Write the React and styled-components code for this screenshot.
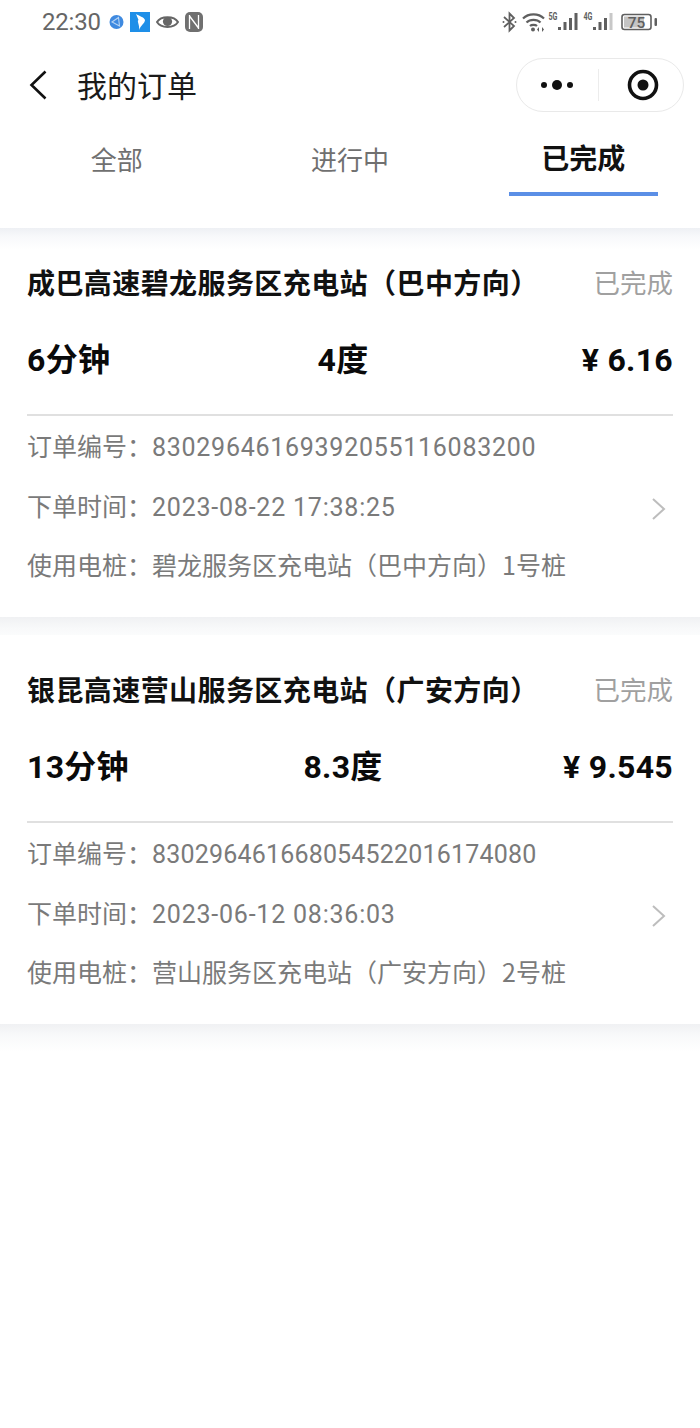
import React from "react";
import styled, { createGlobalStyle } from "styled-components";

const Global = createGlobalStyle`
  html, body { margin: 0; padding: 0; background: #fff; }
  body { font-family: Roboto, "Noto Sans CJK SC", sans-serif; }
  * { box-sizing: border-box; }
`;

const Page = styled.div`
  width: 700px;
  height: 1428px;
  background: #fff;
  overflow: hidden;
`;

const StatusBar = styled.div`
  height: 42px;
  padding: 1px 43px 0 42px;
  display: flex;
  align-items: center;
  color: #666;
`;

const Time = styled.span`
  font-family: Roboto, sans-serif;
  font-size: 24px;
  width: 67px;
  letter-spacing: -0.2px;
`;

const LeftIcons = styled.div`
  display: flex;
  align-items: center;
  gap: 6px;
`;

const RightIcons = styled.div`
  display: flex;
  align-items: center;
`;

const RightIcon = styled.svg`
  margin-left: ${(p) => p.$gap || 0}px;
`;

const Spacer = styled.div`
  flex: 1;
`;

const Nav = styled.div`
  height: 86px;
  padding: 0 16px 0 29px;
  display: flex;
  align-items: center;
`;

const Title = styled.h1`
  margin: 0 0 0 30px;
  padding-bottom: 3px;
  font-family: "Noto Sans CJK SC", sans-serif;
  font-size: 30px;
  font-weight: 400;
  color: #1a1a1a;
  flex: 1;
`;

const Capsule = styled.div`
  width: 168px;
  height: 54px;
  border: 1px solid #e9e9e9;
  border-radius: 27px;
  display: flex;
  align-items: center;
  background: #fff;
`;

const CapsuleCell = styled.div`
  flex: 1;
  display: flex;
  align-items: center;
  justify-content: center;
  padding-left: ${(p) => p.$shift || 0}px;
`;

const CapsuleDivider = styled.div`
  width: 1px;
  height: 32px;
  background: #ececec;
`;

const Tabs = styled.div`
  position: relative;
  z-index: 1;
  height: 100px;
  display: flex;
  background: #fff;

  &::after {
    content: "";
    position: absolute;
    top: 100%;
    left: 0;
    right: 0;
    height: 22px;
    background: linear-gradient(#eef0f4, #f8f9fb 40%, rgba(255, 255, 255, 0));
  }
`;

const Tab = styled.div`
  position: relative;
  flex: 1;
  height: 64px;
  padding-top: ${(p) => (p.$active ? 9 : 11)}px;
  text-align: center;
  font-family: "Noto Sans CJK SC", sans-serif;
  font-size: ${(p) => (p.$active ? 28 : 26)}px;
  line-height: 40px;
  font-weight: ${(p) => (p.$active ? 700 : 400)};
  color: ${(p) => (p.$active ? "#111" : "#707070")};
`;

const Underline = styled.div`
  position: absolute;
  bottom: -4px;
  left: 42px;
  width: 149px;
  height: 4px;
  background: #5b8fe6;
`;

const Card = styled.section`
  position: relative;
  height: 389px;
  margin-bottom: 18px;
  padding: 36px 27px 0;
  background: #fff;

  &::after {
    content: "";
    position: absolute;
    top: 100%;
    left: 0;
    right: 0;
    height: 28px;
    background: linear-gradient(#f0f1f3, #f8f9fa 40%, rgba(255, 255, 255, 0));
  }
`;

const TitleRow = styled.div`
  height: 40px;
  display: flex;
  justify-content: space-between;
  align-items: center;
  padding-bottom: 4px;
  font-family: "Noto Sans CJK SC", sans-serif;
`;

const Station = styled.div`
  font-size: 28px;
  font-weight: 700;
  letter-spacing: 0.42px;
  line-height: 36px;
  color: #111;
`;

const State = styled.div`
  font-size: 26.5px;
  line-height: 36px;
  color: #a0a0a0;
`;

const Stats = styled.div`
  height: 40px;
  margin-top: 36px;
  display: flex;
  justify-content: space-between;
  align-items: center;
  font-family: Roboto, "Noto Sans CJK SC", sans-serif;
  font-size: 32px;
  line-height: 40px;
  font-weight: 700;
  color: #0a0a0a;
  letter-spacing: 0.3px;
`;

const StatCenter = styled.span`
  margin-right: 6px;
`;

const Divider = styled.div`
  height: 2px;
  margin: 34px 0 1.5px;
  background: #e0e0e0;
`;

const InfoRow = styled.div`
  height: 59.5px;
  display: flex;
  align-items: center;
  font-family: "Noto Sans CJK SC", sans-serif;
  font-size: 25px;
  line-height: 36px;
  color: #7a7a7a;
`;

const InfoLabel = styled.span`
  width: 125px;
  flex: none;
  padding-bottom: 4px;
`;

const InfoValue = styled.span`
  flex: 1;
  padding-top: 2px;
  font-family: Roboto, "Noto Sans CJK SC", sans-serif;
  letter-spacing: ${(p) => p.$spacing}px;
  white-space: nowrap;
`;

const PileValue = styled.span`
  flex: 1;
  padding-bottom: 4px;
  white-space: nowrap;
`;

const Chevron = styled.svg`
  margin: 4px 6px 0 0;
`;

const IconText = styled.text`
  font-family: Roboto, sans-serif;
  font-weight: ${(p) => p.$weight || 700};
  fill: #5f5f5f;
`;

const Signal = ({ label, gap, lastFill }) => (
  <RightIcon $gap={gap} width="30" height="22" viewBox="0 0 30 22">
    <IconText x="0.5" y="8.5" fontSize="11" textLength="9" lengthAdjust="spacingAndGlyphs">{label}</IconText>
    <rect x="10" y="16" width="3" height="3" fill="#5f5f5f" />
    <rect x="15.5" y="11" width="3" height="8" fill="#5f5f5f" />
    <rect x="21" y="7" width="3" height="12" fill="#5f5f5f" />
    <rect x="26.5" y="2" width="3" height="17" fill={lastFill} />
  </RightIcon>
);

const StatusLeftIcons = () => (
  <LeftIcons>
    <svg width="15" height="16" viewBox="0 0 15 16">
      <circle cx="7.5" cy="8" r="7" fill="#3f8ae0" />
      <path d="M9.5 3.5 L3 8 L10.5 12 Z" fill="none" stroke="#b6d4f4" strokeWidth="1.1" />
    </svg>
    <svg width="20" height="20" viewBox="0 0 20 20">
      <rect width="20" height="20" fill="#1e8fe8" />
      <path d="M6 2 C9 4 14 5 15 8 C15 11 11 13 9 18 C10 13 6.5 9 8.5 8 Z" fill="#fff" />
    </svg>
    <svg width="23" height="16" viewBox="0 0 23 16">
      <path d="M1 8 C5 1.5 18 1.5 22 8 C18 14.5 5 14.5 1 8 Z" fill="none" stroke="#666" strokeWidth="2" />
      <circle cx="11.5" cy="7.5" r="4.6" fill="#666" />
    </svg>
    <svg width="18" height="20" viewBox="0 0 18 20">
      <rect width="18" height="20" rx="5" fill="#707070" />
      <path d="M4.5 17 V3 M13.5 17 V3 M4.5 4 L13.5 16" fill="none" stroke="#fff" strokeWidth="1.3" />
    </svg>
  </LeftIcons>
);

const StatusRightIcons = () => (
  <RightIcons>
    <RightIcon width="15" height="22" viewBox="0 0 15 22">
      <path d="M2 6 L12 15 L7.5 19.5 V2.5 L12 7 L2 16" fill="none" stroke="#5f5f5f" strokeWidth="1.8" />
      <circle cx="1.5" cy="11" r="1" fill="#5f5f5f" />
      <circle cx="13.5" cy="11" r="1" fill="#5f5f5f" />
    </RightIcon>
    <RightIcon $gap={5} width="23" height="20" viewBox="0 0 23 20">
      <path d="M1 6.5 C6.5 1 16.5 1 22 6.5 M4.5 10.5 C8 7 15 7 18.5 10.5 M8 14 C9.5 12.6 13.5 12.6 15 14" fill="none" stroke="#5f5f5f" strokeWidth="2.2" />
      <circle cx="11" cy="17.5" r="2" fill="#5f5f5f" />
      <path d="M17 15 L15 17.5 L17 20 Z M20 15 L22 17.5 L20 20 Z" fill="#5f5f5f" />
    </RightIcon>
    <Signal label="5G" gap={3} lastFill="#5f5f5f" />
    <Signal label="4G" gap={5} lastFill="#c8c8c8" />
    <RightIcon $gap={8} width="36" height="18" viewBox="0 0 36 18">
      <rect x="1" y="1.5" width="29" height="15" rx="2.5" fill="#fff" stroke="#5f5f5f" strokeWidth="1.6" />
      <rect x="3" y="3.5" width="20" height="11" fill="#c4c4c4" />
      <IconText x="15.5" y="14.5" fontSize="15.5" textAnchor="middle" $weight={500}>75</IconText>
      <rect x="33.5" y="5" width="2.5" height="8" rx="1" fill="#5f5f5f" />
    </RightIcon>
  </RightIcons>
);

const orders = [
  {
    station: "成巴高速碧龙服务区充电站（巴中方向）",
    duration: "6分钟",
    energy: "4度",
    price: "¥ 6.16",
    no: "83029646169392055116083200",
    noSpacing: 0.73,
    time: "2023-08-22 17:38:25",
    pile: "碧龙服务区充电站（巴中方向）1号桩",
  },
  {
    station: "银昆高速营山服务区充电站（广安方向）",
    duration: "13分钟",
    energy: "8.3度",
    price: "¥ 9.545",
    no: "830296461668054522016174080",
    noSpacing: 0.19,
    time: "2023-06-12 08:36:03",
    pile: "营山服务区充电站（广安方向）2号桩",
  },
];

const OrderCard = ({ order }) => (
  <Card>
    <TitleRow>
      <Station>{order.station}</Station>
      <State>已完成</State>
    </TitleRow>
    <Stats>
      <span>{order.duration}</span>
      <StatCenter>{order.energy}</StatCenter>
      <span>{order.price}</span>
    </Stats>
    <Divider />
    <InfoRow>
      <InfoLabel>订单编号：</InfoLabel>
      <InfoValue $spacing={order.noSpacing}>{order.no}</InfoValue>
    </InfoRow>
    <InfoRow>
      <InfoLabel>下单时间：</InfoLabel>
      <InfoValue $spacing={0.78}>{order.time}</InfoValue>
      <Chevron width="16" height="24" viewBox="0 0 16 24">
        <path d="M2 2 L13 12 L2 22" fill="none" stroke="#bdbdbd" strokeWidth="2" />
      </Chevron>
    </InfoRow>
    <InfoRow>
      <InfoLabel>使用电桩：</InfoLabel>
      <PileValue>{order.pile}</PileValue>
    </InfoRow>
  </Card>
);

export default function App() {
  return (
    <Page>
      <Global />
      <StatusBar>
        <Time>22:30</Time>
        <StatusLeftIcons />
        <Spacer />
        <StatusRightIcons />
      </StatusBar>
      <Nav>
        <svg width="18" height="30" viewBox="0 0 18 30">
          <path d="M16.5 1.5 L2.5 15 L16.5 28.5" fill="none" stroke="#111" strokeWidth="2.6" />
        </svg>
        <Title>我的订单</Title>
        <Capsule>
          <CapsuleCell>
            <svg width="36" height="12" viewBox="0 0 36 12">
              <circle cx="5" cy="6" r="3" fill="#111" />
              <circle cx="18" cy="6" r="5" fill="#111" />
              <circle cx="31" cy="6" r="3" fill="#111" />
            </svg>
          </CapsuleCell>
          <CapsuleDivider />
          <CapsuleCell $shift={4}>
            <svg width="32" height="32" viewBox="0 0 32 32">
              <circle cx="16" cy="16" r="13.5" fill="none" stroke="#111" strokeWidth="3.6" />
              <circle cx="16" cy="16" r="5.5" fill="#111" />
            </svg>
          </CapsuleCell>
        </Capsule>
      </Nav>
      <Tabs>
        <Tab>全部</Tab>
        <Tab>进行中</Tab>
        <Tab $active>
          已完成
          <Underline />
        </Tab>
      </Tabs>
      {orders.map((order) => (
        <OrderCard key={order.no} order={order} />
      ))}
    </Page>
  );
}
